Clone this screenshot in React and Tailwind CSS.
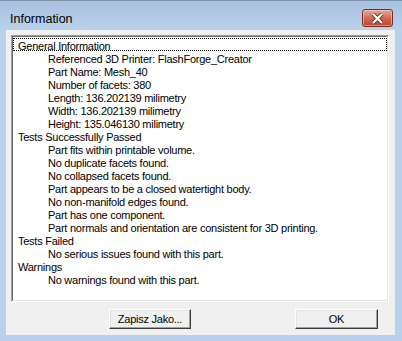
import React from "react";

const items = [
    { text: "General Information", level: 0, focus: true },
    { text: "Referenced 3D Printer: FlashForge_Creator", level: 1 },
    { text: "Part Name: Mesh_40", level: 1 },
    { text: "Number of facets: 380", level: 1 },
    { text: "Length: 136.202139 milimetry", level: 1 },
    { text: "Width: 136.202139 milimetry", level: 1 },
    { text: "Height: 135.046130 milimetry", level: 1 },
    { text: "Tests Successfully Passed", level: 0 },
    { text: "Part fits within printable volume.", level: 1 },
    { text: "No duplicate facets found.", level: 1 },
    { text: "No collapsed facets found.", level: 1 },
    { text: "Part appears to be a closed watertight body.", level: 1 },
    { text: "No non-manifold edges found.", level: 1 },
    { text: "Part has one component.", level: 1 },
    { text: "Part normals and orientation are consistent for 3D printing.", level: 1 },
    { text: "Tests Failed", level: 0 },
    { text: "No serious issues found with this part.", level: 1 },
    { text: "Warnings", level: 0 },
    { text: "No warnings found with this part.", level: 1 },
];

function CloseButton() {
    return (
        <button className="w-[31px] h-[18px] rounded-[3px] border border-[#7a2c20] bg-gradient-to-b from-[#e9a99b] via-[#d06a55] to-[#c0402a] shadow-[inset_0_0_0_1px_rgba(255,220,210,0.5)] flex items-center justify-center">
            <svg width="13" height="11" viewBox="0 0 13 11">
                <path
                    d="M2 1 L11 10 M11 1 L2 10"
                    stroke="#6a2a1c"
                    strokeWidth="4"
                    fill="none"
                />
                <path
                    d="M2 1 L11 10 M11 1 L2 10"
                    stroke="#ffffff"
                    strokeWidth="2.4"
                    fill="none"
                />
            </svg>
        </button>
    );
}

function WinButton({ children, className }) {
    return (
        <button
            className={
                "h-[20px] bg-[#f0f0f0] border border-t-white border-l-white border-r-[#3c3c3c] border-b-[#3c3c3c] shadow-[inset_-1px_-1px_0_#a0a0a0,inset_1px_1px_0_#e3e3e3] text-[11px] tracking-[-0.25px] leading-[18px] text-black text-center " +
                className
            }
        >
            {children}
        </button>
    );
}

export default function App() {
    return (
        <div
            className="w-[402px] h-[341px] flex flex-col bg-[#b9d1ea] border-t border-t-[#7f93ac] overflow-hidden"
            style={{ fontFamily: '"Liberation Sans", Arial, sans-serif' }}
        >
            <div className="h-[29px] flex items-start justify-between pl-[10px] pr-[9px] bg-gradient-to-b from-[#a7c1df] to-[#bbd2eb]">
                <span className="text-[12.5px] leading-none text-black mt-[12px]">
                    Information
                </span>
                <div className="mt-[8px]">
                    <CloseButton />
                </div>
            </div>
            <div className="mx-[6px] mr-[7px] h-[305px] bg-[#f0f0f0] flex flex-col pt-[5px] px-[5px] pr-[6px]">
                <div className="h-[267px] border border-t-[#a0a0a0] border-l-[#a0a0a0] border-r-white border-b-white">
                    <div className="h-full bg-white border border-t-[#696969] border-l-[#696969] border-r-[#e3e3e3] border-b-[#e3e3e3] pt-px text-[11px] tracking-[-0.25px] text-black">
                        {items.map((it, i) => (
                            <div
                                key={i}
                                className={
                                    "h-[13px] leading-[14px] whitespace-nowrap border " +
                                    (it.focus ? "border-dotted border-black" : "border-transparent") +
                                    (it.level ? " pl-[34px]" : " pl-[4px]")
                                }
                            >
                                {it.text}
                            </div>
                        ))}
                    </div>
                </div>
                <div className="flex mt-[7px]">
                    <WinButton className="ml-[98px] w-[82px]">Zapisz Jako...</WinButton>
                    <WinButton className="ml-[104px] w-[83px]">OK</WinButton>
                </div>
            </div>
        </div>
    );
}
